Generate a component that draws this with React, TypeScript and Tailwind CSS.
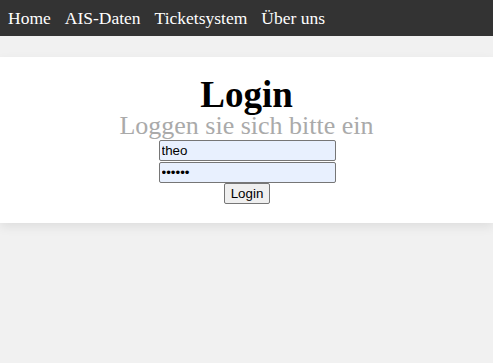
export default function App() {
  return (
    <div className="min-h-[363px] bg-[#f1f1f1] font-['Liberation_Serif',serif]">
      <nav className="flex h-[36px] items-center gap-[14px] bg-[#333333] px-[8px] text-[17.5px] text-white">
        <a>Home</a>
        <a>AIS-Daten</a>
        <a>Ticketsystem</a>
        <a>Über uns</a>
      </nav>
      <div className="mt-[21px] flex flex-col items-center bg-white pt-[20px] pb-[19px] shadow-[0_4px_10px_rgba(0,0,0,0.08)]">
        <h1 className="text-[37px] font-bold leading-[36px] text-black">Login</h1>
        <p className="text-[26px] leading-[26px] text-[#aaaaaa]">Loggen sie sich bitte ein</p>
        <form className="mt-[1px] flex flex-col items-center pl-[1px] font-['Liberation_Sans',sans-serif]">
          <input
            className="h-[21px] w-[177px] rounded-[2px] border border-[#767676] bg-[#e8f0fe] px-[2px] text-[13.33px] text-black outline-none"
            defaultValue="theo"
          />
          <input
            type="password"
            className="mt-[1px] h-[21px] w-[177px] rounded-[2px] border border-[#767676] bg-[#e8f0fe] px-[2px] text-[13.33px] text-black outline-none"
            defaultValue="123456"
          />
          <button
            type="button"
            className="h-[21px] rounded-[2px] border border-[#767676] bg-[#efefef] px-[6px] text-[13.33px] leading-none text-black"
          >
            Login
          </button>
        </form>
      </div>
    </div>
  );
}
